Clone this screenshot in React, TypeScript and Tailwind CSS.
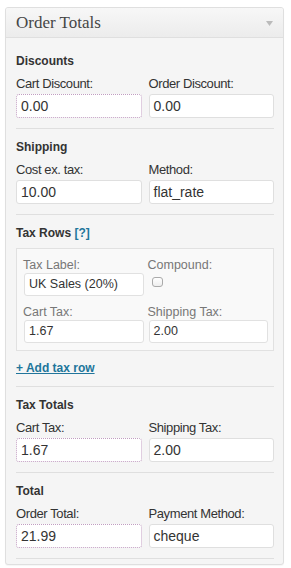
import React from "react";

const sans = { fontFamily: '"Liberation Sans", Arial, sans-serif' };

function Field({ label, value, dotted }: { label: string; value: string; dotted?: boolean }) {
  return (
    <div className="flex flex-col">
      <div className="h-[16px] leading-[16px] text-[13px] text-[#333] tracking-[-0.4px]">{label}</div>
      <div
        className={
          "mt-[2px] h-[24px] rounded-[3px] bg-white pl-[4px] flex items-center text-[14px] text-[#333] " +
          (dotted ? "border border-dotted border-[#c19ec1]" : "border border-[#dfdfdf]")
        }
      >
        {value}
      </div>
    </div>
  );
}

function InnerField({ label, value }: { label: string; value: string }) {
  return (
    <div className="flex flex-col">
      <div className="h-[16px] leading-[16px] text-[12.5px] text-[#777] -ml-[1px]">{label}</div>
      <div className="h-[23px] rounded-[3px] bg-white border border-[#e1e1e1] pl-[4px] flex items-center text-[12.5px] text-[#333]">
        {value}
      </div>
    </div>
  );
}

function Heading({ children }: { children: React.ReactNode }) {
  return <div className="mt-[10px] h-[16px] leading-[16px] text-[12px] font-bold text-[#333]">{children}</div>;
}

function Divider() {
  return <div className="mt-[10px] h-px bg-[#dfdfdf]" />;
}

function Section({ title, a, b }: { title: string; a: [string, string, boolean?]; b: [string, string] }) {
  return (
    <>
      <Heading>{title}</Heading>
      <div className="mt-[7px] grid grid-cols-2 gap-x-[7px]">
        <Field label={a[0]} value={a[1]} dotted={a[2]} />
        <Field label={b[0]} value={b[1]} />
      </div>
      <Divider />
    </>
  );
}

export default function App() {
  return (
    <div className="w-[291px] h-[568px] bg-white pt-[7px] pl-[5px]" style={sans}>
      <div className="w-[279px] h-[558px] border border-[#dfdfdf] rounded-[3px] bg-[#f5f5f5] overflow-hidden shadow-[0_1px_1px_rgba(0,0,0,0.04)]">
        <div className="h-[30px] border-b border-[#dfdfdf] bg-gradient-to-b from-[#f7f7f7] to-[#ececec] flex items-center justify-between pl-[10px] pr-[10px]">
          <span
            className="text-[17px] text-[#464646] leading-none"
            style={{ fontFamily: '"Liberation Serif", Georgia, serif' }}
          >
            Order Totals
          </span>
          <svg width="7" height="5" viewBox="0 0 7 5" className="mt-[1px]">
            <path d="M0 0 L7 0 L3.5 5 Z" fill="#bbbbbb" />
          </svg>
        </div>
        <div className="pl-[10px] pr-[9px] pt-[5px] flex flex-col">
          <Section title="Discounts" a={["Cart Discount:", "0.00", true]} b={["Order Discount:", "0.00"]} />
          <Section title="Shipping" a={["Cost ex. tax:", "10.00"]} b={["Method:", "flat_rate"]} />

          <Heading>
            Tax Rows <span className="text-[#21759b]">[?]</span>
          </Heading>
          <div className="mt-[7px] border border-[#e1e1e1] bg-[#f9f9f9] pl-[7px] pr-[5px] pt-[8px] pb-[7px]">
            <div className="grid grid-cols-2 gap-x-[5px]">
              <InnerField label="Tax Label:" value="UK Sales (20%)" />
              <div className="flex flex-col">
                <div className="h-[16px] leading-[16px] text-[12.5px] text-[#777] -ml-[1px]">Compound:</div>
                <div className="mt-[4px] ml-[3px] w-[11px] h-[10px] rounded-[3px] border border-[#aaa] bg-gradient-to-b from-white to-[#eee]" />
              </div>
            </div>
            <div className="mt-[8px] grid grid-cols-2 gap-x-[5px]">
              <InnerField label="Cart Tax:" value="1.67" />
              <InnerField label="Shipping Tax:" value="2.00" />
            </div>
          </div>
          <div className="mt-[9px] h-[16px] leading-[16px] text-[12px] font-bold text-[#21759b] underline">
            + Add tax row
          </div>
          <Divider />

          <Section title="Tax Totals" a={["Cart Tax:", "1.67", true]} b={["Shipping Tax:", "2.00"]} />
          <Section title="Total" a={["Order Total:", "21.99", true]} b={["Payment Method:", "cheque"]} />
        </div>
      </div>
    </div>
  );
}
